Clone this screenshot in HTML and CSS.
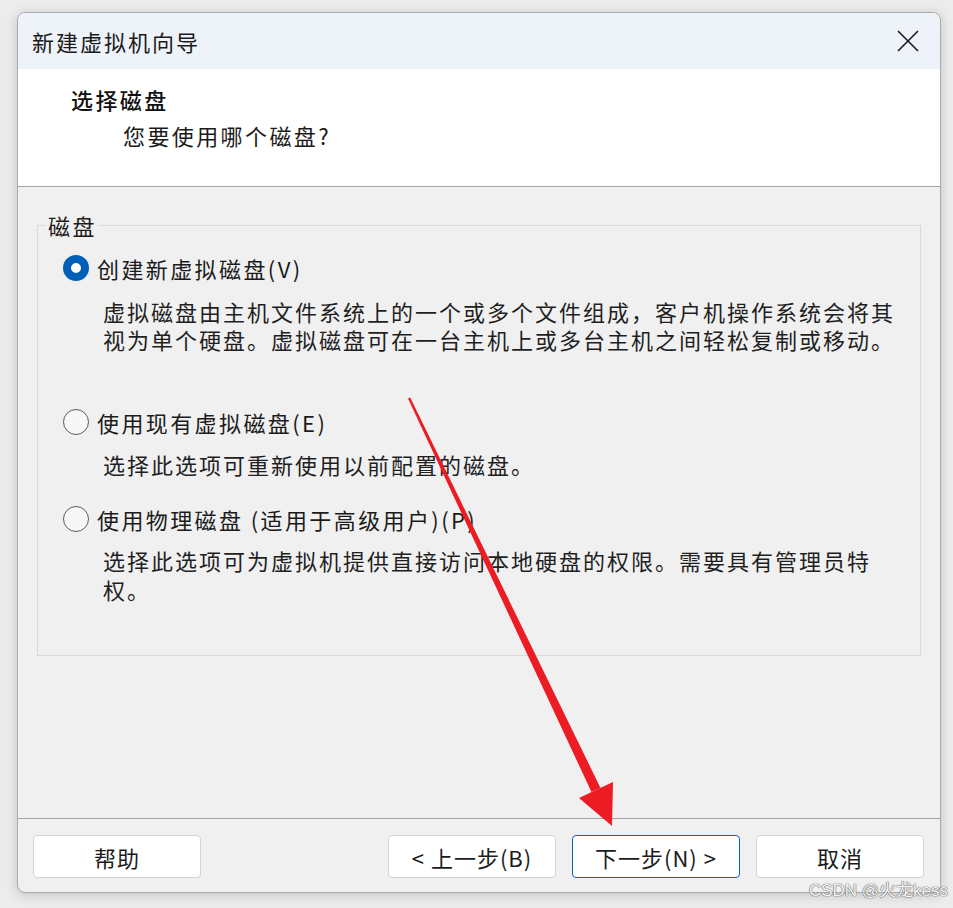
FILE: index.html
```html
<!DOCTYPE html>
<html lang="zh-CN">
<head>
<meta charset="utf-8">
<title>新建虚拟机向导</title>
<link rel="stylesheet" href="styles.css">
</head>
<body>
<div class="window">
  <div class="titlebar">
    <span class="title">新建虚拟机向导</span>
    <svg class="close" width="22" height="22" viewBox="0 0 22 22"><path d="M1 1 L21 21 M21 1 L1 21" stroke="#1a1a1a" stroke-width="1.6" fill="none"/></svg>
  </div>
  <div class="header">
    <div class="h-title">选择磁盘</div>
    <div class="h-sub">您要使用哪个磁盘?</div>
  </div>
  <div class="content">
    <fieldset class="group">
      <legend>磁盘</legend>
      <div class="opt first">
        <span class="radio checked"></span>
        <span class="label">创建新虚拟磁盘(V)</span>
      </div>
      <div class="desc d1">虚拟磁盘由主机文件系统上的一个或多个文件组成，客户机操作系统会将其<br>视为单个硬盘。虚拟磁盘可在一台主机上或多台主机之间轻松复制或移动。</div>
      <div class="opt second">
        <span class="radio"></span>
        <span class="label">使用现有虚拟磁盘(E)</span>
      </div>
      <div class="desc d2">选择此选项可重新使用以前配置的磁盘。</div>
      <div class="opt third">
        <span class="radio"></span>
        <span class="label">使用物理磁盘 (适用于高级用户)(P)</span>
      </div>
      <div class="desc d3">选择此选项可为虚拟机提供直接访问本地硬盘的权限。需要具有管理员特<br>权。</div>
    </fieldset>
  </div>
  <div class="footer">
    <button class="btn">帮助</button>
    <div class="spacer"></div>
    <button class="btn">&lt; 上一步(B)</button>
    <button class="btn primary">下一步(N) &gt;</button>
    <button class="btn">取消</button>
  </div>
</div>
<svg class="arrow" width="953" height="908" viewBox="0 0 953 908">
  <polygon points="408,398.5 410.2,397.5 600.5,787.9 591.5,792.1" fill="#ec1c24"/>
  <polygon points="579,798 613,782 612,826" fill="#ec1c24"/>
</svg>
<div class="watermark">CSDN @火龙kess</div>
</body>
</html>
```
FILE: styles.css
```css
html, body {
  margin: 0;
  padding: 0;
}
body {
  width: 953px;
  height: 908px;
  background: #ececec;
  font-family: "Microsoft YaHei", "Noto Sans CJK SC", "Noto Sans", sans-serif;
  color: #1b1b1b;
  position: relative;
  overflow: hidden;
}
.window {
  position: relative;
  margin: 12px 0 0 17px;
  width: 922px;
  height: 879px;
  border: 1px solid #ababab;
  border-radius: 8px;
  background: #f0f0f0;
  box-shadow: 0 2px 12px rgba(0,0,0,0.18);
  display: flex;
  flex-direction: column;
  overflow: hidden;
}
.titlebar {
  height: 56px;
  background: #eef2f9;
  display: flex;
  align-items: center;
  justify-content: space-between;
  padding: 0 21px 0 14px;
  flex: none;
}
.title {
  font-size: 22px;
  letter-spacing: 2px;
  line-height: 28px;
}
.close {
  display: block;
}
.header {
  height: 118px;
  background: #ffffff;
  border-bottom: 1px solid #a3a3a3;
  flex: none;
  box-sizing: border-box;
  padding-top: 16px;
}
.h-title {
  margin-left: 53px;
  font-size: 22px;
  line-height: 28px;
  letter-spacing: 2.4px;
  font-weight: 500;
  color: #111;
}
.h-sub {
  margin-left: 105px;
  margin-top: 8px;
  font-size: 22px;
  line-height: 28px;
  letter-spacing: 2.4px;
}
.content {
  flex: 1;
  padding: 24px 19px 0 19px;
}
.group {
  margin: 0;
  height: 445px;
  box-sizing: border-box;
  border: 1px solid #d9d9d9;
  padding: 0 0 0 25px;
}
.group legend {
  margin-left: -17px;
  padding: 0 2px;
  font-size: 22px;
  line-height: 28px;
  letter-spacing: 2.4px;
}
.opt {
  display: flex;
  align-items: center;
  height: 28px;
}
.opt.first { margin-top: 15px; }
.opt.second { margin-top: 55px; }
.opt.third { margin-top: 26px; }
.radio {
  width: 26px;
  height: 26px;
  box-sizing: border-box;
  border-radius: 50%;
  border: 1.5px solid #5c5c5c;
  background: #f7f7f7;
  flex: none;
  margin-right: 8px;
}
.radio.checked {
  border: 8px solid #005fb8;
  background: #ffffff;
}
.label {
  font-size: 22px;
  line-height: 28px;
  letter-spacing: 2.4px;
}
.desc {
  margin-left: 40px;
  font-size: 22px;
  line-height: 27.5px;
  letter-spacing: 2px;
  color: #1f1f1f;
}
.d1 { margin-top: 16px; }
.d2 { margin-top: 15px; }
.d3 { margin-top: 13px; line-height: 29px; }
.footer {
  height: 74px;
  flex: none;
  border-top: 1px solid #a3a3a3;
  box-sizing: border-box;
  display: flex;
  align-items: flex-start;
  padding: 16px 16px 0 15px;
  gap: 16px;
}
.spacer { flex: 1; }
.btn {
  width: 168px;
  height: 43px;
  background: #ffffff;
  border: 1px solid #d3d3d3;
  border-radius: 4px;
  font-family: inherit;
  font-size: 22px;
  color: #1b1b1b;
  letter-spacing: 1px;
  padding: 0;
}
.btn.primary {
  border-color: #0a62b8;
}
.arrow {
  position: absolute;
  left: 0;
  top: 0;
  pointer-events: none;
}
.watermark {
  position: absolute;
  right: 5px;
  bottom: 7px;
  font-family: "Liberation Sans", "Noto Sans CJK SC", sans-serif;
  font-size: 17px;
  color: #f7f7f7;
  text-shadow: 0 0 1px #6a6a6a, 0 0 1px #6a6a6a, 0 0 1px #6a6a6a;
}
```
